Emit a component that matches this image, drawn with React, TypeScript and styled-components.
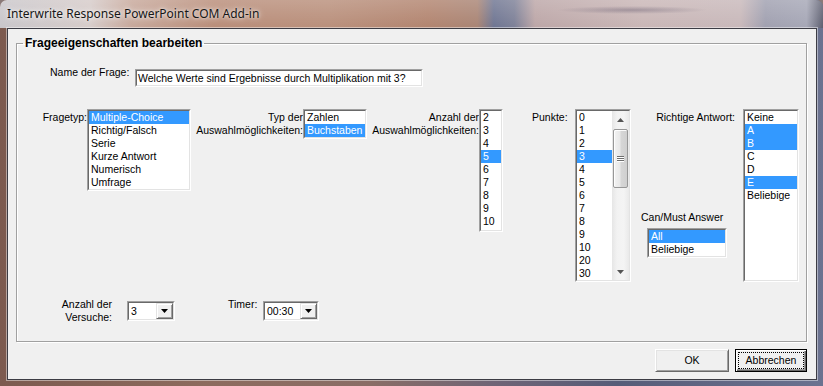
import React from "react";
import styled, { createGlobalStyle, css } from "styled-components";

const GlobalStyle = createGlobalStyle`
  html, body { margin: 0; padding: 0; }
  body {
    width: 823px;
    height: 386px;
    overflow: hidden;
    font-family: "Liberation Sans", Arial, sans-serif;
    background: #8a7a78;
  }
  * { box-sizing: border-box; }
`;

const uiFont = css`
  font-family: "Liberation Sans", Arial, sans-serif;
  font-size: 10.5px;
  line-height: 13px;
  color: #000;
`;

const Window = styled.div`
  width: 823px;
  height: 386px;
  display: flex;
  flex-direction: column;
  padding: 0 6px 6px 7px;
  border-radius: 7px 7px 0 0;
  overflow: hidden;
  background: linear-gradient(
    to right,
    #7c5a4f 0%,
    #8d6b5e 25%,
    #8a6d66 45%,
    #6f6476 60%,
    #565c78 75%,
    #6b7290 100%
  );
`;

const TitleBar = styled.div`
  height: 28px;
  flex: none;
  margin: 0 -6px 0 -7px;
  padding: 0 0 1px 7px;
  display: flex;
  align-items: center;
  font-family: "Segoe UI", "Noto Sans", "Open Sans", sans-serif;
  font-size: 12px;
  color: #161616;
  text-shadow: 0 0 6px rgba(255, 255, 255, 0.95), 0 0 3px rgba(255, 255, 255, 0.7);
  background:
    radial-gradient(ellipse 75px 4px at 632px 10px, rgba(80, 70, 95, 0.35), rgba(80, 70, 95, 0)),
    linear-gradient(to bottom, rgba(255, 255, 255, 0.18), rgba(255, 255, 255, 0) 28px),
    linear-gradient(
      to right,
      #c9c6ca 0%,
      #d6cbc9 11%,
      #c7a89b 16%,
      #b98d79 26%,
      #b98f7b 40%,
      #b2846f 52%,
      #a98474 58%,
      #6e7592 60%,
      #7d8097 62.5%,
      #bca6a7 65%,
      #c9b6b6 78%,
      #c8b8ba 90%,
      #a0a0b0 93%,
      #a6a7b6 98%,
      #5d5f70 100%
    );
`;

const Client = styled.div`
  flex: 1;
  display: flex;
  flex-direction: column;
  padding: 7px 9px 7px 8px;
  background: #f0f0f0;
  border: 1px solid #3c3c44;
  box-shadow: 0 0 0 1px rgba(255, 255, 255, 0.45);
`;

const Group = styled.fieldset`
  margin: 0;
  padding: 0;
  min-width: 0;
  height: 306px;
  flex: none;
  border: 1px solid #a0a0a0;
  box-shadow: inset 1px 1px 0 #fff, 1px 1px 0 #fff;
  display: flex;
  flex-direction: column;
`;

const Legend = styled.legend`
  margin-left: 6px;
  padding: 0 2px;
  font-family: "Liberation Sans", Arial, sans-serif;
  font-weight: bold;
  font-size: 12px;
  line-height: 14px;
  color: #000;
`;

const NameRow = styled.div`
  display: flex;
  align-items: flex-start;
  margin-top: 16px;
  padding-left: 33px;
`;

const Label = styled.div<{ $width: number; $align?: "left" | "right"; $top?: number; $left?: number }>`
  ${uiFont};
  flex: none;
  width: ${(p) => p.$width}px;
  text-align: ${(p) => p.$align ?? "right"};
  margin-top: ${(p) => p.$top ?? 0}px;
  margin-left: ${(p) => p.$left ?? 0}px;
  white-space: nowrap;
`;

const sunken = css`
  position: relative;
  border: 1px solid;
  border-color: #a0a0a0 #fff #fff #a0a0a0;
  padding: 1px;
  background: #fff;
  &::after {
    content: "";
    position: absolute;
    inset: 0;
    border: 1px solid;
    border-color: #696969 #e3e3e3 #e3e3e3 #696969;
    pointer-events: none;
  }
`;

const TextInput = styled.div`
  ${sunken};
  ${uiFont};
  flex: none;
  width: 288px;
  height: 18px;
  margin-top: 3px;
  padding-left: 2px;
  line-height: 14px;
  white-space: nowrap;
  overflow: hidden;
`;

const ListsRow = styled.div`
  display: flex;
  align-items: flex-start;
  margin-top: 22px;
  padding-left: 23px;
`;

const Field = styled.div<{ $left?: number }>`
  display: flex;
  align-items: flex-start;
  flex: none;
  margin-left: ${(p) => p.$left ?? 0}px;
`;

const SideColumn = styled.div`
  display: flex;
  flex-direction: column;
  width: 102px;
  flex: none;
`;

const CanMustBlock = styled.div`
  display: flex;
  flex-direction: column;
  align-items: flex-start;
  margin-top: 87px;
`;

const ListBox = styled.div<{ $width: number; $height?: number; $left?: number; $top?: number }>`
  ${sunken};
  flex: none;
  display: flex;
  width: ${(p) => p.$width}px;
  ${(p) => (p.$height ? `height: ${p.$height}px;` : "")}
  margin-left: ${(p) => p.$left ?? 0}px;
  margin-top: ${(p) => p.$top ?? 0}px;
  overflow: hidden;
`;

const Items = styled.div`
  flex: 1;
  min-width: 0;
  display: flex;
  flex-direction: column;
`;

const Item = styled.div<{ $selected?: boolean }>`
  ${uiFont};
  height: 13px;
  padding-left: 2px;
  white-space: nowrap;
  overflow: hidden;
  background: ${(p) => (p.$selected ? "#3399ff" : "transparent")};
  color: ${(p) => (p.$selected ? "#fff" : "#000")};
`;

const ScrollBar = styled.div`
  width: 17px;
  flex: none;
  display: flex;
  flex-direction: column;
  background: linear-gradient(to right, #e6e6e6, #f2f2f2 30%, #f4f4f4 70%, #e9e9e9);
`;

const ScrollArrow = styled.div`
  height: 17px;
  flex: none;
  display: flex;
  align-items: center;
  justify-content: center;
`;

const ScrollTrack = styled.div`
  flex: 1;
  display: flex;
  flex-direction: column;
  padding: 1px 0 0 1px;
`;

const Thumb = styled.div`
  width: 15px;
  height: 59px;
  border: 1px solid #979797;
  border-radius: 2px;
  background: linear-gradient(to right, #f3f3f3, #e8e8e8 45%, #d6d6d6 55%, #cfcfcf);
  box-shadow: inset 1px 1px 0 rgba(255, 255, 255, 0.9);
  display: flex;
  flex-direction: column;
  align-items: center;
  justify-content: center;
  gap: 1px;
`;

const Grip = styled.div`
  width: 7px;
  height: 1px;
  background: #6e6e6e;
  box-shadow: 0 1px 0 #fff;
`;

const BottomRow = styled.div`
  display: flex;
  align-items: flex-start;
  margin-top: 16px;
  padding-left: 35px;
`;

const Combo = styled.div<{ $width: number; $left: number }>`
  ${sunken};
  flex: none;
  display: flex;
  width: ${(p) => p.$width}px;
  height: 20px;
  margin-top: 3px;
  margin-left: ${(p) => p.$left}px;
`;

const ComboValue = styled.div`
  ${uiFont};
  flex: 1;
  padding-left: 2px;
  line-height: 16px;
  white-space: nowrap;
`;

const ComboButton = styled.div`
  width: 17px;
  height: 16px;
  flex: none;
  display: flex;
  align-items: center;
  justify-content: center;
  background: #f0f0f0;
  border: 1px solid;
  border-color: #e3e3e3 #696969 #696969 #e3e3e3;
  box-shadow: inset 1px 1px 0 #fff, inset -1px -1px 0 #a0a0a0;
`;

const Footer = styled.div`
  display: flex;
  justify-content: flex-end;
  gap: 6px;
  margin-top: 7px;
`;

const Button = styled.div<{ $width: number; $default?: boolean }>`
  ${uiFont};
  width: ${(p) => p.$width}px;
  height: 23px;
  display: flex;
  padding: ${(p) => (p.$default ? "2px" : "0")};
  background: #f0f0f0;
  border: 1px solid;
  ${(p) =>
    p.$default
      ? css`
          border-color: #000;
          box-shadow: inset 1px 1px 0 #fff, inset -1px -1px 0 #696969, inset -2px -2px 0 #a0a0a0;
        `
      : css`
          border-color: #fff #696969 #696969 #fff;
          box-shadow: inset 1px 1px 0 #e3e3e3, inset -1px -1px 0 #a0a0a0;
        `}
`;

const ButtonFace = styled.div<{ $focus?: boolean }>`
  flex: 1;
  display: flex;
  align-items: center;
  justify-content: center;
  border: 1px ${(p) => (p.$focus ? "dotted #000" : "solid transparent")};
`;

const ArrowDown = ({ color = "#000", w = 7 }: { color?: string; w?: number }) => (
  <svg width={w} height={4} viewBox={`0 0 ${w} 4`}>
    <polygon points={`0,0 ${w},0 ${w / 2},4`} fill={color} />
  </svg>
);

const ArrowUp = ({ color = "#000", w = 7 }: { color?: string; w?: number }) => (
  <svg width={w} height={4} viewBox={`0 0 ${w} 4`}>
    <polygon points={`0,4 ${w},4 ${w / 2},0`} fill={color} />
  </svg>
);

type ListProps = {
  items: string[];
  selected: number[];
  width: number;
  height?: number;
  left?: number;
  top?: number;
};

const List = ({ items, selected, width, height, left, top }: ListProps) => (
  <ListBox $width={width} $height={height} $left={left} $top={top}>
    <Items>
      {items.map((it, i) => (
        <Item key={it + i} $selected={selected.includes(i)}>
          {it}
        </Item>
      ))}
    </Items>
  </ListBox>
);

const fragetyp = ["Multiple-Choice", "Richtig/Falsch", "Serie", "Kurze Antwort", "Numerisch", "Umfrage"];
const typ = ["Zahlen", "Buchstaben"];
const anzahl = ["2", "3", "4", "5", "6", "7", "8", "9", "10"];
const punkte = ["0", "1", "2", "3", "4", "5", "6", "7", "8", "9", "10", "20", "30"];
const richtig = ["Keine", "A", "B", "C", "D", "E", "Beliebige"];
const canMust = ["All", "Beliebige"];

export default function App() {
  return (
    <>
      <GlobalStyle />
      <Window>
        <TitleBar>Interwrite Response PowerPoint COM Add-in</TitleBar>
        <Client>
          <Group>
            <Legend>Frageeigenschaften bearbeiten</Legend>
            <NameRow>
              <Label $width={85} $align="left">
                Name der Frage:
              </Label>
              <TextInput>Welche Werte sind Ergebnisse durch Multiplikation mit 3?</TextInput>
            </NameRow>

            <ListsRow>
              <Field>
                <Label $width={47} $top={2}>
                  Fragetyp:
                </Label>
                <List items={fragetyp} selected={[0]} width={104} />
              </Field>

              <Field $left={2}>
                <Label $width={110} $top={2}>
                  Typ der
                  <br />
                  Auswahlmöglichkeiten:
                </Label>
                <List items={typ} selected={[1]} width={64} />
              </Field>

              <Field $left={2}>
                <Label $width={110} $top={2}>
                  Anzahl der
                  <br />
                  Auswahlmöglichkeiten:
                </Label>
                <List items={anzahl} selected={[3]} width={24} height={123} />
              </Field>

              <Field $left={29}>
                <Label $width={43} $align="left" $top={2}>
                  Punkte:
                </Label>
                <ListBox $width={56}>
                  <Items>
                    {punkte.map((it, i) => (
                      <Item key={it} $selected={i === 3}>
                        {it}
                      </Item>
                    ))}
                  </Items>
                  <ScrollBar>
                    <ScrollArrow>
                      <ArrowUp color="#555" />
                    </ScrollArrow>
                    <ScrollTrack>
                      <Thumb>
                        <Grip />
                        <Grip />
                        <Grip />
                      </Thumb>
                    </ScrollTrack>
                    <ScrollArrow>
                      <ArrowDown color="#555" />
                    </ScrollArrow>
                  </ScrollBar>
                </ListBox>
              </Field>

              <Field $left={10}>
                <SideColumn>
                  <Label $width={94} $top={2}>
                    Richtige Antwort:
                  </Label>
                  <CanMustBlock>
                    <Label $width={96} $align="left">
                      Can/Must Answer
                    </Label>
                    <List items={canMust} selected={[0]} width={80} left={6} top={4} />
                  </CanMustBlock>
                </SideColumn>
                <List items={richtig} selected={[1, 2, 5]} width={56} height={173} />
              </Field>
            </ListsRow>

            <BottomRow>
              <Label $width={60}>
                Anzahl der
                <br />
                Versuche:
              </Label>
              <Combo $width={48} $left={15}>
                <ComboValue>3</ComboValue>
                <ComboButton>
                  <ArrowDown />
                </ComboButton>
              </Combo>
              <Label $width={35} $align="left" $left={53}>
                Timer:
              </Label>
              <Combo $width={56} $left={0}>
                <ComboValue>00:30</ComboValue>
                <ComboButton>
                  <ArrowDown />
                </ComboButton>
              </Combo>
            </BottomRow>
          </Group>
          <Footer>
            <Button $width={74}>
              <ButtonFace>OK</ButtonFace>
            </Button>
            <Button $width={72} $default>
              <ButtonFace $focus>Abbrechen</ButtonFace>
            </Button>
          </Footer>
        </Client>
      </Window>
    </>
  );
}
